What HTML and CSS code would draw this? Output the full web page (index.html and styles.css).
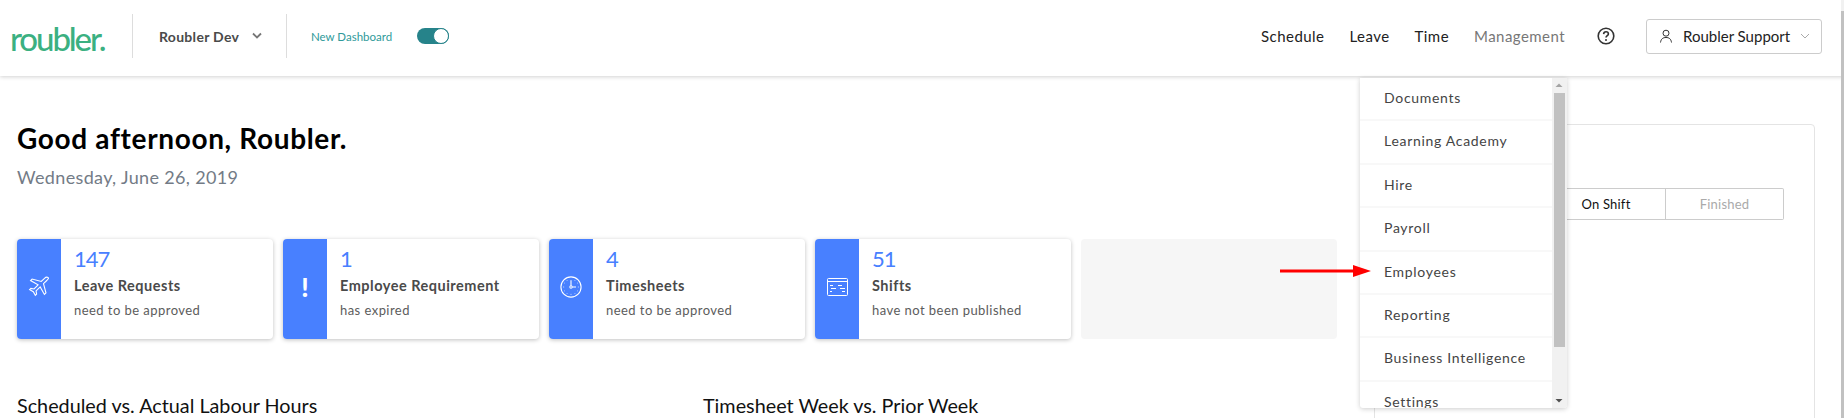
FILE: index.html
```html
<!DOCTYPE html>
<html lang="en">
<head>
    <meta charset="UTF-8">
    <meta name="viewport" content="width=device-width, initial-scale=1.0">
    <title>Roubler Dashboard</title>
    <link rel="stylesheet" href="styles.css">
</head>
<body>
    <header class="topbar">
        <div class="logo">roubler.</div>
        <div class="org">
            <span>Roubler Dev</span>
            <svg class="chevron" width="12" height="8" viewBox="0 0 12 8"><path d="M2 1.500 6 5.500 10 1.500" fill="none" stroke="#777" stroke-width="1.800"/></svg>
        </div>
        <div class="switcher">
            <span>New Dashboard</span>
            <div class="toggle"><div class="knob"></div></div>
        </div>
        <nav class="nav">
            <a>Schedule</a>
            <a>Leave</a>
            <a>Time</a>
            <a class="active">Management</a>
        </nav>
        <svg class="help" width="18" height="18" viewBox="0 0 18 18">
            <circle cx="9" cy="9" r="7.800" fill="none" stroke="#333" stroke-width="1.600"/>
            <path d="M6.600 7.100C6.700 5.600 7.700 4.800 9 4.800c1.400 0 2.400.9 2.400 2.100 0 1.700-2.400 1.800-2.400 3.700" fill="none" stroke="#333" stroke-width="1.600"/>
            <circle cx="9" cy="13" r="1" fill="#333"/>
        </svg>
        <div class="user">
            <svg width="14" height="14" viewBox="0 0 14 14"><circle cx="7" cy="4.200" r="3" fill="none" stroke="#333"/><path d="M1.500 13.500C2 9.800 4 8.500 7 8.500s5 1.300 5.500 5" fill="none" stroke="#333"/></svg>
            <span>Roubler Support</span>
            <svg width="10" height="6" viewBox="0 0 10 6"><path d="M1 1 5 5 9 1" fill="none" stroke="#aaa"/></svg>
        </div>
    </header>

    <div class="content">
        <main class="main">
            <h1>Good afternoon, Roubler.</h1>
            <p class="date">Wednesday, June 26, 2019</p>
            <div class="cards">
                <div class="card">
                    <div class="card-icon">
                        <svg width="22" height="22" viewBox="0 0 24 24"><path d="M22 1.800c-1-.9-2.800-.5-4 .7l-3.500 3.500L4.500 3.300 2.800 5l8.200 4.600-4.400 4.500-3.400-.6-1.400 1.400 4 2.200 2.200 4 1.400-1.400-.6-3.400 4.500-4.400 4.600 8.200 1.700-1.700L16.900 8.400l3.600-3.500c1.200-1.200 2.400-2.200 1.500-3.100z" fill="none" stroke="#fff" stroke-width="1.200"/></svg>
                    </div>
                    <div class="card-body">
                        <div class="count">147</div>
                        <div class="card-title">Leave Requests</div>
                        <div class="card-sub">need to be approved</div>
                    </div>
                </div>
                <div class="card">
                    <div class="card-icon"><span class="bang">!</span></div>
                    <div class="card-body">
                        <div class="count">1</div>
                        <div class="card-title">Employee Requirement</div>
                        <div class="card-sub">has expired</div>
                    </div>
                </div>
                <div class="card">
                    <div class="card-icon">
                        <svg width="22" height="22" viewBox="0 0 24 24"><circle cx="12" cy="12" r="11" fill="none" stroke="#fff" stroke-width="1.200"/><path d="M12 4.500v6.200M13.200 12h4.300" fill="none" stroke="#fff" stroke-width="1.200"/><circle cx="12" cy="12" r="1.300" fill="none" stroke="#fff" stroke-width="1.100"/><path d="M12 19.500v1M3.500 12h1M19.500 12h1M7.500 4.500l.4.7M16.100 18.800l.4.7M4.500 7.500l.7.4M18.800 16.100l.7.4M4.500 16.500l.7-.4M18.800 7.900l.7-.4M7.500 19.500l.4-.7M16.100 5.200l.4-.7" stroke="#fff" stroke-width=".8"/></svg>
                    </div>
                    <div class="card-body">
                        <div class="count">4</div>
                        <div class="card-title">Timesheets</div>
                        <div class="card-sub">need to be approved</div>
                    </div>
                </div>
                <div class="card">
                    <div class="card-icon">
                        <svg width="21" height="18" viewBox="0 0 21 18"><rect x=".5" y=".5" width="20" height="17" rx="1" fill="none" stroke="#fff"/><path d="M.5 3.500h20M3 7.500h3M11 7.500h4M4 10.500h5M13 10.500h5M3 13.500h2M15 13.500h3" fill="none" stroke="#fff"/></svg>
                    </div>
                    <div class="card-body">
                        <div class="count">51</div>
                        <div class="card-title">Shifts</div>
                        <div class="card-sub">have not been published</div>
                    </div>
                </div>
                <div class="card card-empty"></div>
            </div>
            <div class="charts">
                <h2>Scheduled vs. Actual Labour Hours</h2>
                <h2>Timesheet Week vs. Prior Week</h2>
            </div>
        </main>
        <aside class="panel">
            <div class="tabs">
                <div class="tab">On Shift</div>
                <div class="tab tab-muted">Finished</div>
            </div>
        </aside>
    </div>

    <div class="menu">
        <ul class="menu-list">
            <li>Documents</li>
            <li>Learning Academy</li>
            <li>Hire</li>
            <li>Payroll</li>
            <li>Employees</li>
            <li>Reporting</li>
            <li>Business Intelligence</li>
            <li>Settings</li>
        </ul>
        <div class="scrollbar">
            <svg width="14" height="15" viewBox="0 0 14 15"><path d="M3.500 9 7 5.500 10.500 9z" fill="#a3a3a3"/></svg>
            <div class="thumb"></div>
            <svg width="14" height="15" viewBox="0 0 14 15"><path d="M3.500 6 7 9.500 10.500 6z" fill="#505050"/></svg>
        </div>
    </div>

    <svg class="arrow" width="92" height="14" viewBox="0 0 92 14"><path d="M0 5.500h73V1l18 6-18 6V8.500H0z" fill="#f00"/></svg>

    <div class="page-scroll"><div class="page-thumb"></div></div>
</body>
</html>
```
FILE: styles.css
```css
* {
    box-sizing: border-box;
}

html, body {
    height: 100%;
}

body {
    margin: 0;
    font-family: Lato, "Open Sans", sans-serif;
    color: #333;
    background: #fff;
    overflow: hidden;
    position: relative;
}

/* Top bar */
.topbar {
    display: flex;
    align-items: center;
    height: 76px;
    padding: 0 22px 4px 0;
    background: #fff;
    box-shadow: 0 1px 4px rgba(0, 0, 0, 0.18);
    position: relative;
    z-index: 2;
}

.logo {
    width: 132px;
    padding: 3px 0 0 10px;
    font-size: 33px;
    font-weight: 500;
    color: #3bb081;
    letter-spacing: -2.100px;
    line-height: 44px;
}

.org {
    display: flex;
    align-items: center;
    gap: 12px;
    height: 44px;
    width: 155px;
    padding-left: 26px;
    border-left: 1px solid #ddd;
    border-right: 1px solid #ddd;
    font-size: 14px;
    font-weight: 700;
    color: #4a4a4a;
    letter-spacing: 0.3px;
}

.switcher {
    display: flex;
    align-items: center;
    gap: 25px;
    padding-left: 24px;
    font-size: 11.500px;
    color: #2f9a9a;
}

.toggle {
    display: flex;
    justify-content: flex-end;
    align-items: center;
    width: 32px;
    height: 16px;
    border-radius: 8px;
    background: #26838a;
}

.knob {
    width: 16px;
    height: 16px;
    border: 1.500px solid #26838a;
    border-radius: 50%;
    background: #fff;
}

.nav {
    display: flex;
    gap: 25px;
    margin-left: auto;
    font-size: 15px;
    letter-spacing: 0.45px;
    color: #222;
}

.nav .active {
    color: #777;
}

.help {
    margin: 0 31px 0 32px;
}

.user {
    display: flex;
    align-items: center;
    gap: 10px;
    width: 176px;
    height: 35px;
    padding-left: 12px;
    border: 1px solid #ccc;
    border-radius: 3px;
    font-size: 15px;
    color: #222;
}

/* Dashboard */
.content {
    display: flex;
    padding: 45px 29px 0 17px;
    gap: 36px;
}

.main {
    width: 1321px;
    flex: none;
}

h1 {
    margin: 0;
    font-size: 28px;
    line-height: 34px;
    font-weight: 700;
    color: #000;
    letter-spacing: 0.65px;
}

.date {
    margin: 10px 0 0;
    font-size: 18px;
    line-height: 24px;
    color: #737b86;
    letter-spacing: 0.35px;
}

.cards {
    display: flex;
    gap: 10px;
    margin-top: 50px;
}

.card {
    display: flex;
    width: 256px;
    height: 100px;
    border-radius: 4px;
    background: #fff;
    box-shadow: 0 1px 4px rgba(0, 0, 0, 0.25);
    overflow: hidden;
}

.card-empty {
    background: #f6f6f6;
    box-shadow: none;
}

.card-icon {
    display: flex;
    justify-content: center;
    align-items: center;
    width: 44px;
    padding-bottom: 4px;
    background: #4880ff;
    color: #fff;
}

.bang {
    font-size: 26px;
    font-weight: 900;
}

.card-body {
    padding: 7px 0 0 13px;
}

.count {
    font-size: 22px;
    line-height: 26px;
    color: #4880ff;
    letter-spacing: -1px;
}

.card-title {
    margin-top: 5px;
    font-size: 14.500px;
    line-height: 18px;
    font-weight: 700;
    color: #4a4a4a;
    letter-spacing: 0.5px;
}

.card-sub {
    margin-top: 6px;
    font-size: 13px;
    line-height: 18px;
    color: #5c5c5c;
    letter-spacing: 0.45px;
}

.charts {
    display: flex;
    margin-top: 54px;
}

h2 {
    flex: none;
    width: 686px;
    margin: 0;
    font-size: 19.800px;
    line-height: 24px;
    font-weight: 400;
    color: #111;
}

/* Right panel */
.panel {
    flex: 1;
    height: 340px;
    margin-top: 3px;
    padding: 63px 30px 0 0;
    border: 1px solid #e4e4e4;
    border-radius: 4px;
}

.tabs {
    display: flex;
    justify-content: flex-end;
    height: 32px;
}

.tab {
    display: flex;
    justify-content: center;
    align-items: center;
    width: 120px;
    border: 1px solid #ccc;
    font-size: 13px;
    color: #111;
    letter-spacing: 0.2px;
}

.tab + .tab {
    border-left: none;
}

.tab-muted {
    width: 118px;
    color: #aaa;
    border-radius: 0 2px 2px 0;
}

/* Management dropdown */
.menu {
    display: flex;
    position: absolute;
    top: 78px;
    left: 1360px;
    z-index: 3;
    width: 207px;
    height: 330px;
    background: #fff;
    box-shadow: 0 1px 5px rgba(0, 0, 0, 0.2);
    border-radius: 0 0 3px 3px;
    overflow: hidden;
}

.menu-list {
    flex: 1;
    margin: 0;
    padding: 0;
    list-style: none;
    font-size: 14px;
    color: #444;
}

.menu-list li {
    height: 43.400px;
    padding: 11px 0 0 24px;
    line-height: 18px;
    border-bottom: 2px solid #f8f8f8;
    letter-spacing: 0.7px;
}

.scrollbar {
    display: flex;
    flex-direction: column;
    width: 15px;
    background: #f1f1f1;
}

.thumb {
    flex: none;
    width: 11px;
    height: 254px;
    margin-left: 2px;
    background: #c1c1c1;
}

.scrollbar svg:last-child {
    margin-top: auto;
}

.arrow {
    position: absolute;
    top: 264px;
    left: 1280px;
    z-index: 4;
}

/* Window scrollbar, only its edge is in view */
.page-scroll {
    position: absolute;
    top: 0;
    right: 0;
    bottom: 0;
    z-index: 5;
    width: 3px;
    padding-top: 11px;
    background: #f1f1f1;
}

.page-thumb {
    height: 100%;
    background: #c1c1c1;
}
```
